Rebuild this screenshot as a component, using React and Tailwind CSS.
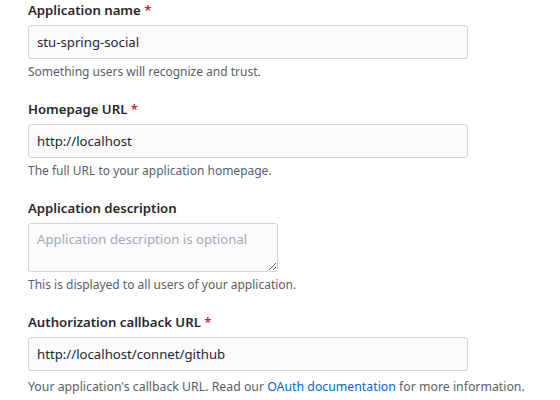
export default function App() {
  const fields = [
    { label: 'Application name', required: true, value: 'stu-spring-social', note: 'Something users will recognize and trust.' },
    { label: 'Homepage URL', required: true, value: 'http://localhost', note: 'The full URL to your application homepage.' },
    { label: 'Application description', textarea: true, placeholder: 'Application description is optional', note: 'This is displayed to all users of your application.' },
    { label: 'Authorization callback URL', required: true, value: 'http://localhost/connet/github', link: true },
  ]

  return (
    <div className="w-[560px] h-[400px] bg-white overflow-hidden pl-[28px] font-['Segoe_UI','Noto_Sans',sans-serif] text-[#24292e]">
      {fields.map((f) => (
        <div key={f.label} className="mb-[18px]">
          <label className="block text-[13.2px] leading-[21px] font-semibold">
            {f.label}
            {f.required && <span className="text-[#cb2431]"> *</span>}
          </label>
          {f.textarea ? (
            <textarea
              placeholder={f.placeholder}
              className="block mt-[4px] w-[250px] h-[49px] px-[8px] py-[5px] text-[13.2px] leading-[20px] bg-[#fafbfc] border border-[#d1d5da] rounded-[3px] placeholder-[#a3aab1] outline-none"
            />
          ) : (
            <input
              defaultValue={f.value}
              className="block mt-[4px] w-[440px] h-[34px] px-[8px] text-[13.2px] bg-[#fafbfc] border border-[#d1d5da] rounded-[3px] outline-none"
            />
          )}
          <p className={`${f.link ? 'mt-[7px] text-[12.3px]' : 'mt-[4px] text-[12px]'} leading-[18px] text-[#586069]`}>
            {f.link ? (
              <>
                Your application's callback URL. Read our{' '}
                <a href="#" className="text-[#0366d6]">OAuth documentation</a> for more information.
              </>
            ) : (
              f.note
            )}
          </p>
        </div>
      ))}
    </div>
  )
}
